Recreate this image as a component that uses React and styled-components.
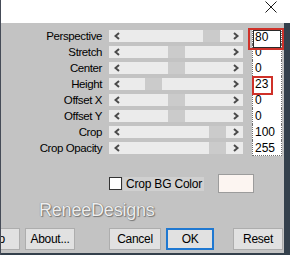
import styled, { createGlobalStyle } from "styled-components";

const Global = createGlobalStyle`
  body {
    margin: 0;
    background: #fff;
  }
`

const rows = [
  { label: "Perspective", value: "80", thumb: 94, mark: { t: -1, l: -5, r: -3, b: -6 }, focus: true },
  { label: "Stretch", value: "0", thumb: 59 },
  { label: "Center", value: "0", thumb: 59 },
  { label: "Height", value: "23", thumb: 36, mark: { t: 0, l: -1, r: 8, b: -3 } },
  { label: "Offset X", value: "0", thumb: 59 },
  { label: "Offset Y", value: "0", thumb: 59 },
  { label: "Crop", value: "100", thumb: 100 },
  { label: "Crop Opacity", value: "255", thumb: 100 },
]

function Chevron({ dir }) {
  const pts = dir === "left" ? "5,1 1.5,4 5,7" : "1,1 4.5,4 1,7"
  return (
    <svg width="7" height="8" viewBox="0 0 7 8">
      <polyline points={pts} fill="none" stroke="#4b4b4b" strokeWidth="2" />
    </svg>
  )
}

export default function App() {
  return (
    <Window>
      <Global />
      <TitleBar>
        <svg width="12" height="12" viewBox="0 0 12 12">
          <path d="M0.5 0.5 L11.5 11.5 M11.5 0.5 L0.5 11.5" stroke="#1a1a1a" strokeWidth="1" />
        </svg>
      </TitleBar>
      <Body>
        <Sliders>
          {rows.map((r, i) => (
            <Row key={r.label}>
              <Label>{r.label}</Label>
              <Track>
                <Chevron dir="left" />
                <Thumb style={{ left: r.thumb }} />
                <Chevron dir="right" />
              </Track>
              <Value $first={i === 0} $last={i === rows.length - 1} $mark={r.mark} $focus={r.focus}>
                {r.value}
              </Value>
            </Row>
          ))}
        </Sliders>
        <CheckRow>
          <CheckBox />
          <CheckLabel>Crop BG Color</CheckLabel>
          <Swatch />
        </CheckRow>
        <Watermark>ReneeDesigns</Watermark>
        <ButtonBar>
          <Button $w={49} $ml={-30}>Info</Button>
          <Button $w={50} $ml={5}>About...</Button>
          <Button $w={52} $ml={34}>Cancel</Button>
          <Button $w={48} $ml={5} $default>OK</Button>
          <Button $w={50} $ml={19}>Reset</Button>
        </ButtonBar>
      </Body>
    </Window>
  )
}

const Window = styled.div`
  width: 290px;
  height: 255px;
  box-sizing: border-box;
  border-left: 1px solid #454b57;
  display: flex;
  flex-direction: column;
  overflow: hidden;
  font-family: "Liberation Sans", Arial, sans-serif;
  font-size: 11.5px;
  letter-spacing: -0.4px;
  color: #000;
`

const TitleBar = styled.div`
  height: 23px;
  flex: none;
  background: #fff;
  display: flex;
  justify-content: flex-end;
  align-items: flex-start;
  padding: 1px 13px 0 0;
  box-sizing: border-box;
`

const Body = styled.div`
  flex: 1;
  background: #c3c3c3;
  border-right: 6px solid #34404c;
  border-bottom: 2px solid #34404c;
  display: flex;
  flex-direction: column;
  padding-top: 5px;
`

const Sliders = styled.div`
  display: flex;
  flex-direction: column;
`

const Row = styled.div`
  height: 16px;
  display: flex;
  align-items: center;
`

const Label = styled.div`
  width: 101px;
  text-align: right;
  line-height: 16px;
`

const Track = styled.div`
  position: relative;
  margin-left: 7px;
  width: 134px;
  height: 12px;
  box-sizing: border-box;
  padding: 0 3px 0 5px;
  background: #ebebeb;
  display: flex;
  align-items: center;
  justify-content: space-between;
`

const Thumb = styled.div`
  position: absolute;
  top: 0;
  width: 17px;
  height: 12px;
  background: #cbcbcb;
`

const Value = styled.div`
  position: relative;
  margin-left: 9px;
  width: 30px;
  height: 16px;
  box-sizing: border-box;
  padding-left: 2px;
  line-height: 16px;
  font-size: 12px;
  letter-spacing: 0;
  background: #fff;
  border-left: 1px dotted #6f6f6f;
  border-right: 1px dotted #6f6f6f;
  border-top: ${p => (p.$first ? "1px dotted #6f6f6f" : "none")};
  border-bottom: ${p => (p.$last ? "1px dotted #6f6f6f" : "none")};

  &::before {
    content: "";
    display: ${p => (p.$focus ? "block" : "none")};
    position: absolute;
    top: 1px;
    left: 0;
    right: 0;
    bottom: -4px;
    border: 1px solid #2a2a2a;
    z-index: 1;
  }

  &::after {
    content: "";
    display: ${p => (p.$mark ? "block" : "none")};
    position: absolute;
    top: ${p => (p.$mark ? p.$mark.t : 0)}px;
    left: ${p => (p.$mark ? p.$mark.l : 0)}px;
    right: ${p => (p.$mark ? p.$mark.r : 0)}px;
    bottom: ${p => (p.$mark ? p.$mark.b : 0)}px;
    border: 2px solid #cf3129;
    z-index: 2;
  }
`

const CheckRow = styled.div`
  display: flex;
  align-items: center;
  margin-top: 18px;
  padding-left: 108px;
  height: 19px;
`

const CheckBox = styled.div`
  width: 13px;
  height: 13px;
  box-sizing: border-box;
  background: #fff;
  border: 1px solid #333;
`

const CheckLabel = styled.div`
  margin-left: 1px;
  padding: 0 2px 0 3px;
  height: 14px;
  line-height: 14px;
  font-size: 12px;
  letter-spacing: -0.2px;
  background: #d0d0d0;
`

const Swatch = styled.div`
  margin-left: 14px;
  width: 36px;
  height: 19px;
  box-sizing: border-box;
  background: #fcf5f1;
  border: 1px solid #9c9c9c;
`

const Watermark = styled.div`
  margin-top: 6px;
  padding-left: 38px;
  font-size: 18px;
  letter-spacing: -0.2px;
  line-height: 22px;
  color: #eeeeee;
  text-shadow: 0 0 1px #5a5a5a, 1px 1px 1px #7a7a7a;
`

const ButtonBar = styled.div`
  margin-top: auto;
  padding-bottom: 3px;
  display: flex;
  align-items: center;
`

const Button = styled.div`
  flex: none;
  width: ${p => p.$w}px;
  margin-left: ${p => p.$ml}px;
  height: 22px;
  box-sizing: border-box;
  display: flex;
  align-items: center;
  justify-content: center;
  background: #e1e1e1;
  border: ${p => (p.$default ? "2px solid #1f78d1" : "1px solid #adadad")};
  font-size: 12px;
  letter-spacing: -0.3px;
`
